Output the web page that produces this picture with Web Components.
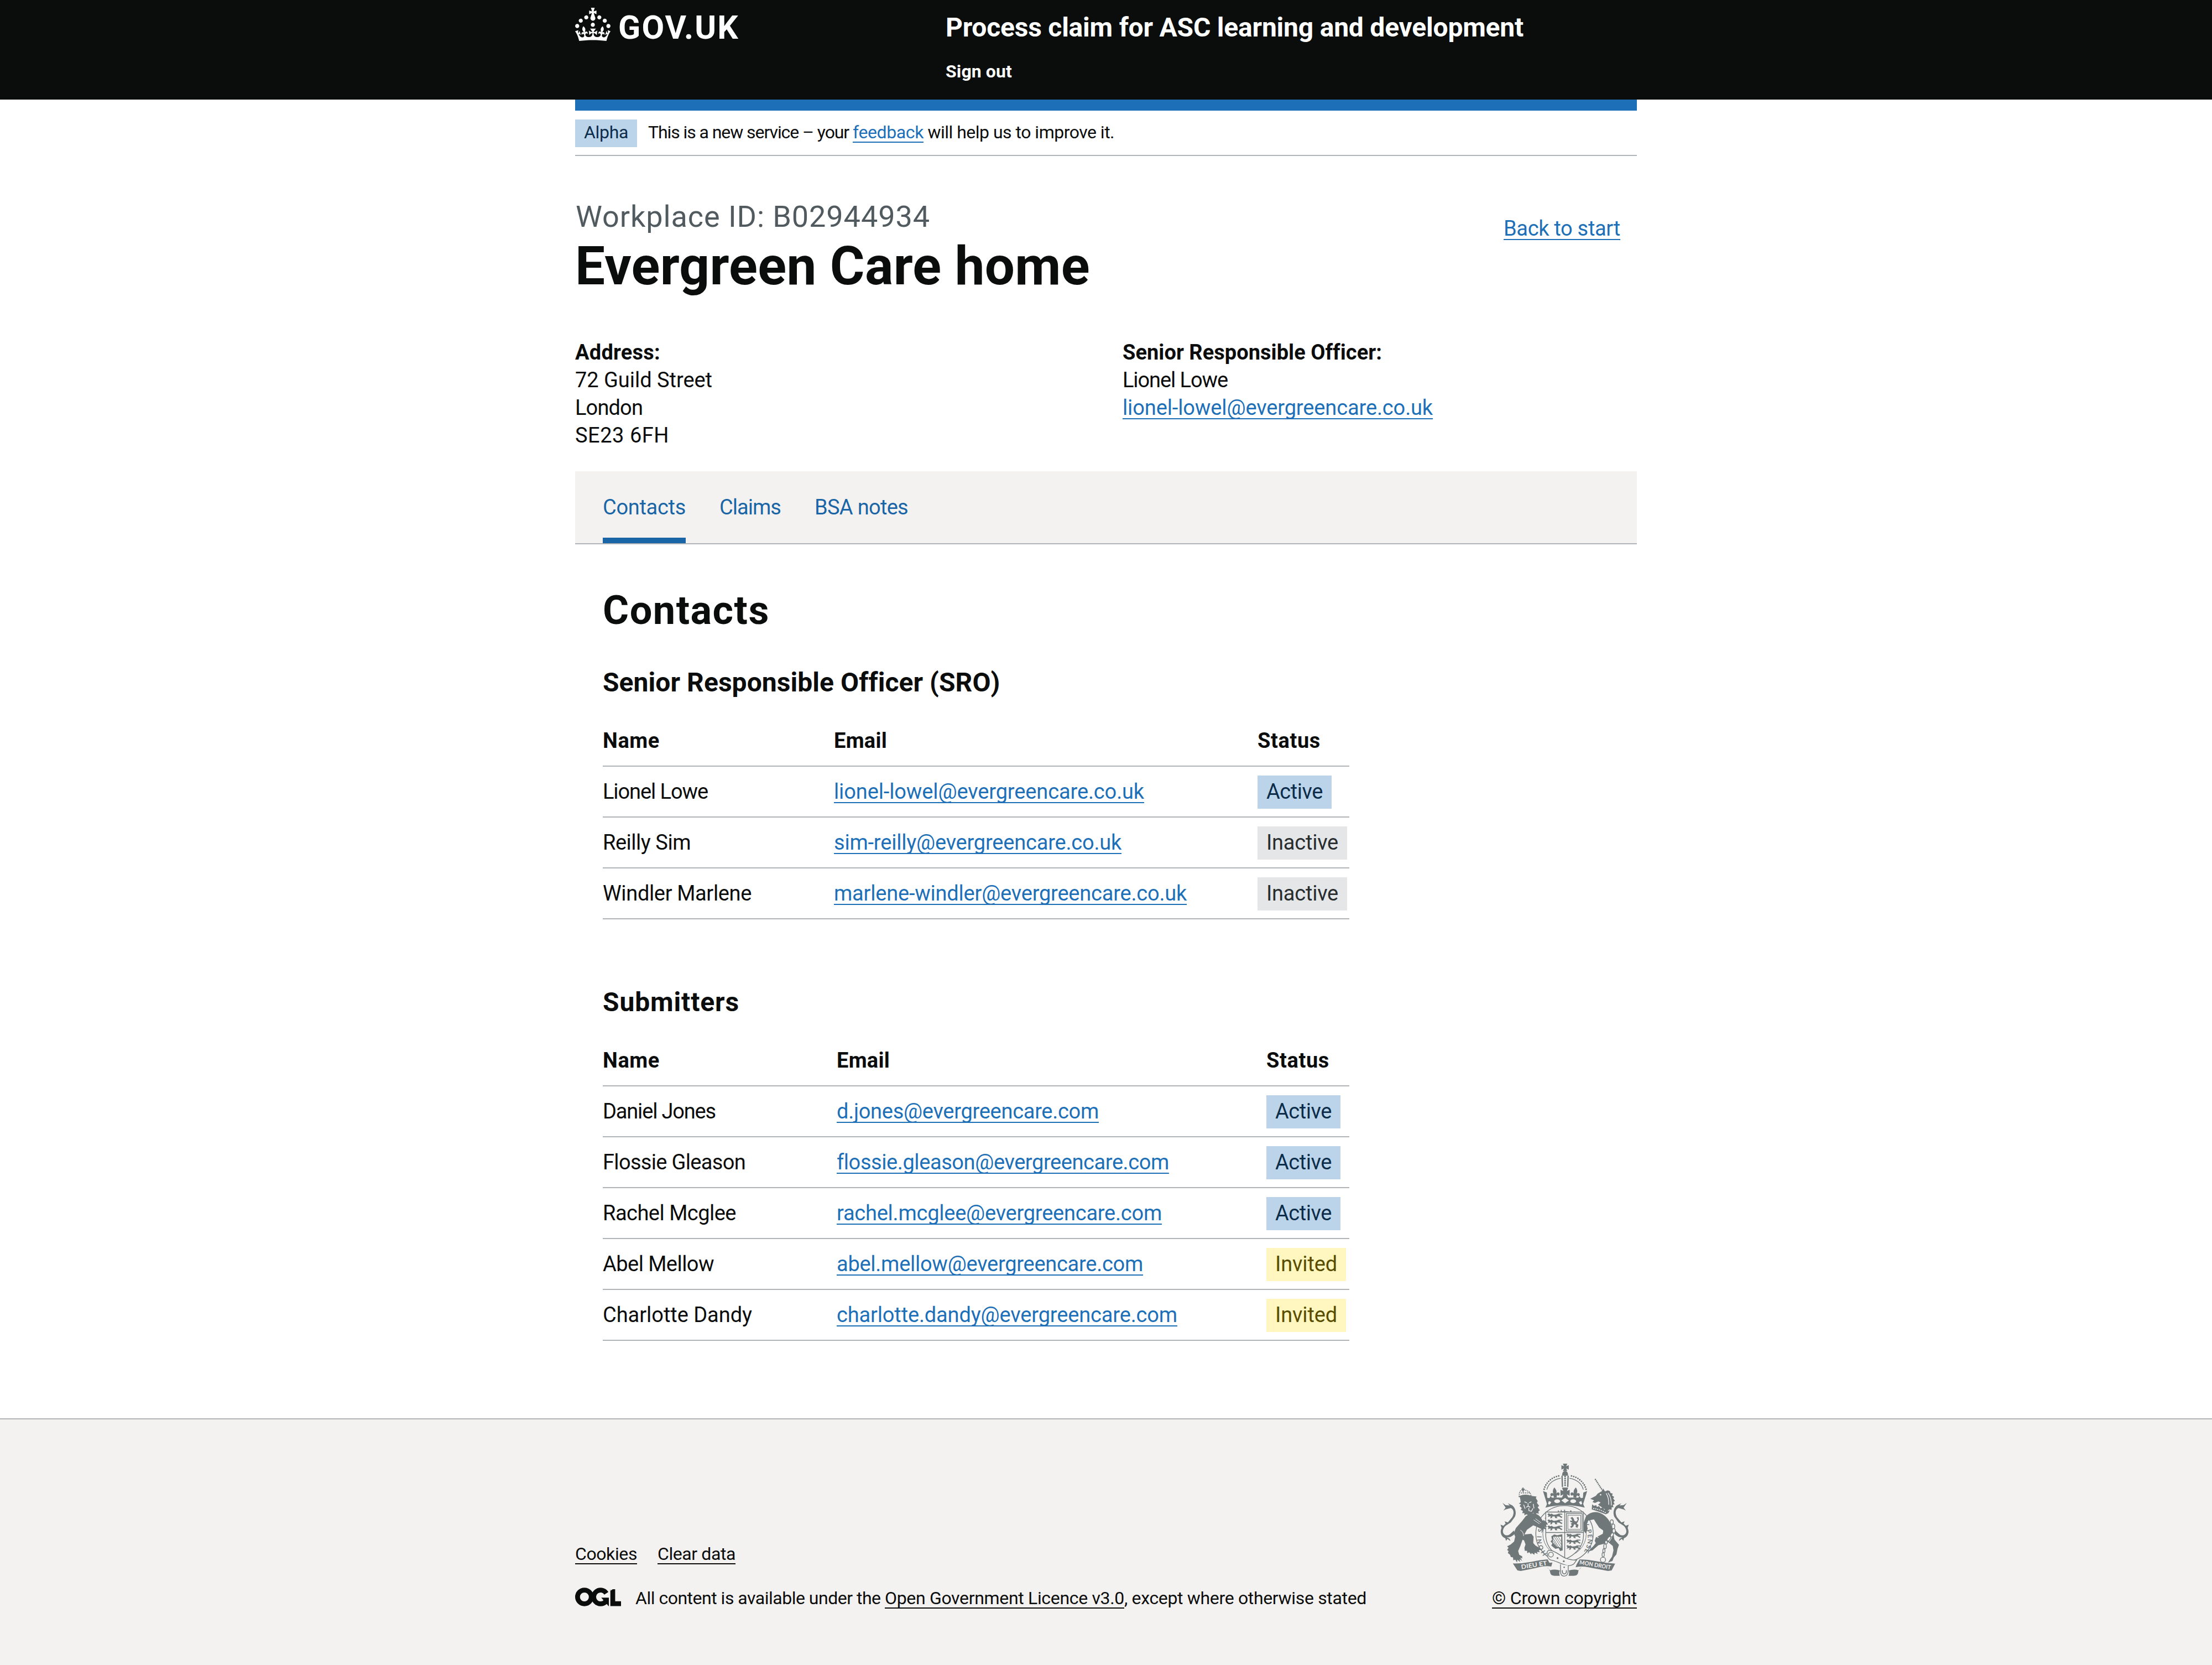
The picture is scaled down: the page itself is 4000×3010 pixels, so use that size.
<!DOCTYPE html>
<html lang="en">
<head>
<meta charset="utf-8">
<title>Evergreen Care home – Process claim for ASC learning and development</title>
<style>
html,body{margin:0;background:#fff}
body{font-family:Roboto,"Liberation Sans",Arial,sans-serif;font-size:38px;line-height:50px;color:#0b0c0c;width:4000px;min-height:3010px}
</style>
</head>
<body>
<claim-page></claim-page>
<script>
const define=(name,html,setup)=>customElements.define(name,class extends HTMLElement{
  constructor(){super();const r=this.attachShadow({mode:'open'});r.innerHTML=html;}
  connectedCallback(){if(setup&&!this.ready){this.ready=true;setup(this,this.shadowRoot);}}
});

define('claim-page',`
<style>
:host{display:flex;flex-direction:column;min-height:3010px}
.wrap{width:1920px;margin:0 auto}
.bar{height:20px;background:#1d70b8}
.body{padding:77px 50px 140px}
h1{margin:0;font-size:72px;line-height:86px;font-weight:700}
contact-table{margin-top:57px}
contact-table+contact-table{margin-top:120px}
site-footer{flex:1}
</style>
<site-header></site-header>
<main class="wrap">
  <div class="bar"></div>
  <phase-banner></phase-banner>
  <workplace-summary></workplace-summary>
  <tab-nav></tab-nav>
  <div class="body">
    <h1><fit-text w="302">Contacts</fit-text></h1>
    <contact-table style="--name:418px;--email:766px">
      <fit-text slot="title" w="716">Senior Responsible Officer (SRO)</fit-text>
      <fit-text slot="email" w="96">Email</fit-text>
      <contact-row name="Lionel Lowe" nw="190" email="lionel-lowel@evergreencare.co.uk" ew="561" status="Active" sw="102"></contact-row>
      <contact-row name="Reilly Sim" nw="159" email="sim-reilly@evergreencare.co.uk" ew="520" status="Inactive" sw="130"></contact-row>
      <contact-row name="Windler Marlene" nw="269" email="marlene-windler@evergreencare.co.uk" ew="638" status="Inactive" sw="130"></contact-row>
    </contact-table>
    <contact-table style="--name:423px;--email:777px">
      <fit-text slot="title" w="247">Submitters</fit-text>
      <fit-text slot="email" w="96">Email</fit-text>
      <contact-row name="Daniel Jones" nw="204" email="d.jones@evergreencare.com" ew="474" status="Active" sw="102"></contact-row>
      <contact-row name="Flossie Gleason" nw="258" email="flossie.gleason@evergreencare.com" ew="600" status="Active" sw="102"></contact-row>
      <contact-row name="Rachel Mcglee" nw="241" email="rachel.mcglee@evergreencare.com" ew="588" status="Active" sw="102"></contact-row>
      <contact-row name="Abel Mellow" nw="201" email="abel.mellow@evergreencare.com" ew="554" status="Invited" sw="112"></contact-row>
      <contact-row name="Charlotte Dandy" nw="270" email="charlotte.dandy@evergreencare.com" ew="616" status="Invited" sw="112"></contact-row>
    </contact-table>
  </div>
</main>
<site-footer></site-footer>`);

define('site-header',`
<style>
:host{display:block;background:#0b0c0c;color:#fff;height:180px}
.in{width:1920px;margin:0 auto;display:flex;align-items:flex-start}
.logo{width:670px;display:flex;gap:14px;padding-top:14px;box-sizing:border-box}
.logo b{font-size:59px;line-height:60px;margin-top:6px}
svg{display:block}
.t{display:flex;flex-direction:column;gap:29px;padding-top:20px;font-weight:700}
.title{font-size:48px;line-height:60px}
.out{font-size:32px;line-height:40px}
</style>
<div class="in">
 <div class="logo">
  <svg width="64" height="60" viewBox="0 0 32 30" fill="currentColor" aria-hidden="true"><path d="M22.6 10.4c-1 .4-2-.1-2.4-1-.4-.9.1-2 1-2.4.9-.4 2 .1 2.4 1s-.1 2-1 2.4m-5.9 6.7c-.9.4-2-.1-2.4-1-.4-.9.1-2 1-2.4.9-.4 2 .1 2.4 1s-.1 2-1 2.4m10.8-3.7c-1 .4-2-.1-2.4-1-.4-.9.1-2 1-2.4.9-.4 2 .1 2.4 1s0 2-1 2.4m3.3 4.8c-1 .4-2-.1-2.4-1-.4-.9.1-2 1-2.4.9-.4 2 .1 2.4 1s-.1 2-1 2.4M17 4.7l2.3 1.2V2.5l-2.3.7-.2-.2.9-3h-3.4l.9 3-.2.2c-.1.1-2.3-.7-2.3-.7v3.4L15 4.7c.1.1.1.2.2.2l-1.3 4c-.1.2-.1.4-.1.6 0 1.1.8 2 1.9 2.2h.7c1-.2 1.9-1.1 1.9-2.1 0-.2 0-.4-.1-.6l-1.3-4c-.1-.2 0-.2.1-.3m-7.6 5.7c.9.4 2-.1 2.4-1 .4-.9-.1-2-1-2.4-.9-.4-2 .1-2.4 1s0 2 1 2.4m-5 3c.9.4 2-.1 2.4-1 .4-.9-.1-2-1-2.4-.9-.4-2 .1-2.4 1s.1 2 1 2.4m-3.2 4.8c.9.4 2-.1 2.4-1 .4-.9-.1-2-1-2.4-.9-.4-2 .1-2.4 1s0 2 1 2.4m14.8 11c4.4 0 8.6.3 12.3.8 1.1-4.5 2.4-7 3.7-8.8l-2.5-.9c.2 1.3.3 1.9 0 2.7-.4-.4-.8-1.1-1.1-2.3l-1.2 4c.7-.5 1.3-.8 2-.9-1.1 2.5-2.6 3.1-3.5 3-1.1-.2-1.7-1.2-1.5-2.1.3-1.2 1.5-1.5 2.1-.1 1.1-2.3-.8-3-2-2.3 1.9-1.9 2.1-3.5.6-5.6-2.1 1.6-2.1 3.2-1.2 5.5-1.2-1.4-3.2-.6-2.5 1.6.9-1.4 2.1-.5 1.9.8-.2 1.1-1.7 2.1-3.5 1.9-2.7-.2-2.9-2.1-2.9-3.6.7-.1 1.9.5 2.9 1.9l.4-4.3c-1.1 1.1-2.1 1.4-3.2 1.4.4-1.2 2.1-3 2.1-3h-5.4s1.7 1.9 2.1 3c-1.1 0-2.1-.2-3.2-1.4l.4 4.3c1-1.4 2.2-2 2.9-1.9-.1 1.5-.2 3.4-2.9 3.6-1.9.2-3.4-.8-3.5-1.9-.2-1.3 1-2.2 1.9-.8.7-2.3-1.2-3-2.5-1.6.9-2.2.9-3.9-1.2-5.5-1.5 2-1.3 3.7.6 5.6-1.2-.7-3.1 0-2 2.3.6-1.4 1.8-1.1 2.1.1.2.9-.3 1.9-1.5 2.1-.9.2-2.4-.5-3.5-3 .6 0 1.2.3 2 .9l-1.2-4c-.3 1.1-.7 1.9-1.1 2.3-.3-.8-.2-1.4 0-2.7l-2.9.9C1.3 23 2.6 25.5 3.7 30c3.7-.5 7.9-.8 12.3-.8"/></svg>
  <b><fit-text w="219">GOV.UK</fit-text></b>
 </div>
 <div class="t">
  <div class="title"><fit-text w="1045">Process claim for ASC learning and development</fit-text></div>
  <div class="out"><fit-text w="120">Sign out</fit-text></div>
 </div>
</div>`);

define('status-tag',`
<style>
:host{display:block;padding:0 16px 2px;line-height:58px;background:#bbd4ea;color:#0c2d4a;white-space:nowrap}
:host([tone=Inactive]){background:#e5e6e7;color:#282d30}
:host([tone=Invited]){background:#fff7bf;color:#594d00}
:host([tone=Alpha]){font-size:32px;line-height:46px;padding-bottom:4px}
</style><slot></slot>`);

define('text-link',`<style>
:host{color:#1d70b8;white-space:nowrap}
:host([dark]){color:#0b0c0c}
a{color:inherit;text-decoration:underline;text-decoration-thickness:2px;text-underline-offset:6px;text-decoration-skip-ink:none}
</style><a><slot></slot></a>`);

define('phase-banner',`
<style>
:host{display:flex;align-items:flex-start;gap:20px;height:64px;padding-top:16px;border-bottom:2px solid #b1b4b6;font-size:32px;line-height:40px}
.m{margin-top:3px;white-space:nowrap}
</style>
<status-tag tone="Alpha"><fit-text w="80">Alpha</fit-text></status-tag>
<div class="m"><fit-text w="370">This is a new service – your </fit-text><text-link><fit-text w="128">feedback</fit-text></text-link><fit-text w="345"> will help us to improve it.</fit-text></div>`);

define('workplace-summary',`
<style>
:host{display:block;padding-bottom:40px}
.top{display:flex;justify-content:space-between;align-items:flex-start;padding-top:80px}
.cap{font-size:54px;line-height:60px;color:#505a5f;padding-left:1px}
.h{font-size:96px;line-height:100px;font-weight:700;margin-top:9px}
text-link{margin:26px 30px 0 0}
.cols{display:grid;grid-template-columns:1fr 1fr;column-gap:60px;margin-top:81px}
.cols text-link{margin:0}
b{display:block}
</style>
<div class="top">
 <div>
  <div class="cap"><fit-text w="641">Workplace ID: B02944934</fit-text></div>
  <div class="h"><fit-text w="931">Evergreen Care home</fit-text></div>
 </div>
 <text-link><fit-text w="211">Back to start</fit-text></text-link>
</div>
<div class="cols">
 <div><b><fit-text w="154">Address:</fit-text></b><div><fit-text w="248">72 Guild Street</fit-text></div><div><fit-text w="122">London</fit-text></div><div><fit-text w="170">SE23 6FH</fit-text></div></div>
 <div><b><fit-text w="467">Senior Responsible Officer:</fit-text></b><div><fit-text w="190">Lionel Lowe</fit-text></div><div><text-link><fit-text w="561">lionel-lowel@evergreencare.co.uk</fit-text></text-link></div></div>
</div>`);

define('tab-nav',`
<style>
:host{display:flex;gap:61px;background:#f3f2f1;border-bottom:2px solid #b1b4b6;padding:40px 50px 0;color:#1a65a6}
div{padding-bottom:30px;border-bottom:10px solid transparent}
.on{border-color:#1a65a6}
</style>
<div class="on"><fit-text w="150">Contacts</fit-text></div><div><fit-text w="111">Claims</fit-text></div><div><fit-text w="169">BSA notes</fit-text></div>`);

define('contact-table',`
<style>
:host{display:block;width:1350px}
.title{font-size:48px;line-height:60px;font-weight:700}
.head{display:grid;grid-template-columns:var(--name) var(--email) 1fr;margin-top:50px;padding-bottom:20px;border-bottom:2px solid #b1b4b6;font-weight:700}
</style>
<div class="title"><slot name="title"></slot></div>
<div class="head"><span><fit-text w="103">Name</fit-text></span><span><slot name="email"></slot></span><span><fit-text w="114">Status</fit-text></span></div>
<slot></slot>`);

define('contact-row',`
<style>
:host{display:grid;grid-template-columns:var(--name) var(--email) 1fr;height:90px;border-bottom:2px solid #b1b4b6;align-items:start}
span{padding-top:20px}
status-tag{margin-top:16px;justify-self:start}
</style>
<span><fit-text class="n"></fit-text></span><span><text-link><fit-text class="e"></fit-text></text-link></span><status-tag><fit-text class="s"></fit-text></status-tag>`,(el,r)=>{
  for(const [c,t,w] of [['.n','name','nw'],['.e','email','ew'],['.s','status','sw']]){
    const f=r.querySelector(c);f.textContent=el.getAttribute(t);f.setAttribute('w',el.getAttribute(w));
  }
  r.querySelector('status-tag').setAttribute('tone',el.getAttribute('status'));
});

define('site-footer',`
<style>
:host{display:block;background:#f3f2f1;border-top:2px solid #b1b4b6;font-size:32px;line-height:40px}
.in{width:1920px;margin:0 auto;padding-top:80px;display:flex;justify-content:space-between;align-items:flex-end}
.links{display:flex;gap:37px}
.lic{display:flex;gap:26px;margin-top:40px;white-space:nowrap}
.ogl{display:block;margin-top:1px}
.r{display:flex;flex-direction:column;align-items:center;gap:19px;width:262px}
</style>
<div class="in">
 <div>
  <div class="links"><text-link dark><fit-text w="112">Cookies</fit-text></text-link><text-link dark><fit-text w="141">Clear data</fit-text></text-link></div>
  <div class="lic">
   <svg class="ogl" width="83" height="34" viewBox="0 0 483.2 195.7" fill="none" stroke="#0b0c0c" stroke-width="50.7" role="img" aria-label="OGL">
    <circle cx="97.8" cy="97.8" r="72.4"/>
    <path d="M329 58.900A72.400 72.400 0 1 0 321 147"/>
    <path d="M275 105.700h80v87.800h-3z" fill="#0b0c0c" stroke="none"/>
    <path d="M396.200 16V168.200H483.200"/>
    <path d="M370.800 0v33L422 0z" fill="#f3f2f1" stroke="none"/>
   </svg>
   <div><fit-text w="451">All content is available under the </fit-text><text-link dark><fit-text w="433">Open Government Licence v3.0</fit-text></text-link><fit-text w="438">, except where otherwise stated</fit-text></div>
  </div>
 </div>
 <div class="r"><royal-arms></royal-arms><text-link dark><fit-text w="262">© Crown copyright</fit-text></text-link></div>
</div>`);

define('royal-arms',`
<style>:host{display:block;height:204px}svg{display:block;width:233px;height:204px}text{font-family:Lato,"Liberation Sans",sans-serif}</style>
<svg viewBox="132 77 698 613" fill="#6f7779" stroke="none" role="img" aria-label="Royal coat of arms">
<defs>
 <path id="lis" d="M0-36C9-24 13-14 7-1 14-10 27-8 25 4 23 13 14 12 13 6 9 8 7 12 8 20H-8C-7 12-9 8-13 6-14 12-23 13-25 4-27-8-14-10-7-1-13-14-9-24 0-36Z"/>
 <path id="cross" d="M-12-20H12L6-6 20-12V12L6 6 12 20H-12L-6 6-20 12V-12L-6-6Z"/>
 <g id="half">
  <path d="M369 216C378 180 412 148 458 142" fill="none" stroke="#6f7779" stroke-width="9" stroke-linecap="round" stroke-dasharray="0 12.500"/>
  <path d="M384 218C392 186 420 162 459 156" fill="none" stroke="#6f7779" stroke-width="4"/>
  <path d="M363 226L384 234 386 262C395 268 404 262 402 252L412 262 450 262 470 268V282H396L386 300Z"/>
  <use href="#lis" transform="translate(428 242) rotate(-6)"/>
 </g>
 <g id="lion3"><path id="pas" d="M0 5L8 1 16 6 22 2 34 9 50 7 62 2 80 3 82 8 66 8 72 16 82 20 76 26 64 18 50 18 54 27 42 26 40 18 28 17 24 27 14 27 20 18 10 18 2 22 6 13Z"/><use href="#pas" y="33"/><use href="#pas" y="66"/></g>
 <path id="motto" d="M389 571A126 130 0 1 1 577 566"/>
</defs>
<!-- imperial crown -->
<use href="#cross" transform="translate(483 97)"/>
<path d="M467 142C466 124 475 117 483 117S500 124 499 142Z"/>
<path d="M463 142L470 142 472 203H465ZM503 142H496L494 203H501Z"/>
<path d="M483 146V203" fill="none" stroke="#6f7779" stroke-width="10" stroke-linecap="round" stroke-dasharray="0 12"/>
<use href="#half"/><use href="#half" transform="translate(966 0) scale(-1 1)"/>
<path d="M466 207H500L493 226 508 219V251L492 244 502 266H464L474 244 458 251V219L473 226Z"/>
<path d="M392 268Q483 252 574 268L584 305Q483 296 382 305Z"/>
<g fill="#f3f2f1"><path d="M463 277L483 263 504 277 483 292Z"/><ellipse cx="440" cy="281" rx="16" ry="10"/><ellipse cx="527" cy="281" rx="16" ry="10"/><path d="M390 294L395 280 408 286 398 302ZM576 294L571 280 558 286 568 302Z"/></g>
<!-- garter -->
<ellipse cx="480" cy="458" rx="156" ry="153" fill="#f3f2f1" stroke="#6f7779" stroke-width="4"/>
<ellipse cx="480" cy="458" rx="118" ry="122" fill="none" stroke="#6f7779" stroke-width="3"/>
<text font-size="34" font-weight="700"><textPath href="#motto" textLength="570" startOffset="6">HONI SOIT QUI MAL Y PENSE</textPath></text>
<path d="M384 299Q483 292 582 299L590 316Q483 288 376 316Z"/>
<!-- shield -->
<path d="M378 340H583V470Q580 552 481 598 382 552 378 470Z" fill="#f3f2f1" stroke="#6f7779" stroke-width="4"/>
<path d="M481 340V598M378 451H583" stroke="#6f7779" stroke-width="4" fill="none"/>
<use href="#lion3" transform="translate(387 346)"/>
<use href="#lion3" transform="translate(490 456) scale(.95)"/>
<g fill="none" stroke="#6f7779"><rect x="490" y="348" width="86" height="95" stroke-width="4"/><rect x="498" y="357" width="70" height="77" stroke-width="3"/></g>
<path d="M512 372L522 366 530 376 534 388 544 392 552 382 546 370 556 366 558 380 552 394 546 402 556 410 550 426 540 420 542 410 532 406 528 418 518 426 510 420 520 412 514 402 524 398 512 394 510 386 522 388 518 378Z"/>
<path d="M408 472L424 462 440 466 468 460 470 548 456 552 448 536 430 540 408 522 414 510 404 500 412 490Z"/>
<path d="M420 474L462 474V534L436 526 416 504Z" fill="#f3f2f1"/>
<path d="M424 474L460 530M434 474L462 516M446 474L462 500M416 480L448 530M418 496L438 526" stroke="#6f7779" stroke-width="3" fill="none"/>
<!-- lion supporter -->
<path d="M234 256C232 226 244 220 256 220S298 226 298 256Z" fill="none" stroke="#6f7779" stroke-width="6" stroke-dasharray="5 5"/>
<path d="M236 252Q268 238 300 252L298 272Q268 260 240 272ZM250 208H258V214H264V220H258V232H252V220H246V214H250Z"/>
<path d="M244 236H292" stroke="#6f7779" stroke-width="5" stroke-dasharray="6 5"/>
<path d="M240 272L262 262 290 262 300 252 328 256 324 264 334 280 330 290 342 306 334 314 346 330 338 336 340 350 330 346 322 352 310 344 290 360 272 352 262 358 262 346 250 346 254 334 242 328 248 318 236 308 244 298 232 294 242 286Z"/>
<path d="M262 284L276 290M300 284L288 290M282 292V308L272 314M282 308L294 314M286 318V332L300 336 308 320M258 300L266 322M310 296L314 320" stroke="#f3f2f1" stroke-width="4" fill="none"/>
<path d="M288 352L312 346C338 352 352 366 360 386L384 396 390 408 376 408 386 420 372 420 382 436 366 430 366 442 350 430 330 420 310 412 276 436 262 462 300 458 312 474 310 508 322 522 336 530 354 544 340 548 346 558 330 556 334 568 318 560 316 572 302 562 298 570 288 558 278 564 276 550 264 550 262 534 268 516 260 494 252 490 240 524 228 552 234 572 250 580 250 592 240 588 250 606 236 596 238 612 224 598 222 614 212 598 202 602 200 586 188 584 184 572 172 562 176 552 168 546 176 534 168 526 188 516 206 500 212 474 204 454 216 426 248 390 270 362Z"/>
<path d="M240 438Q256 446 258 470M312 382L344 404M322 376L352 398" stroke="#f3f2f1" stroke-width="3" fill="none"/>
<path id="tail" d="M143 290L160 302 182 304 172 292 196 304C214 318 220 346 210 366L188 396 160 414C142 430 140 456 156 464 174 472 186 460 204 440L210 458C192 476 176 480 166 476L182 486 186 498 170 486 162 496 158 482C134 474 128 446 138 426L132 408 148 414 160 402 154 390 172 396 196 368C208 344 204 324 188 318L160 326 148 332 160 316Z"/>
<use href="#tail" transform="translate(961 0) scale(-1 1)"/>
<!-- unicorn supporter -->
<path d="M646 160L686 222" stroke="#6f7779" stroke-width="7" stroke-dasharray="7 3" fill="none"/>
<path d="M620 268L650 252 660 240 684 226 690 212 700 228 714 222 726 226 730 236 742 240 738 250 750 258 744 266 754 278 746 284 752 298 742 300 746 314 736 314 736 328 724 326 712 334 662 300 676 288 664 282 646 290 632 286 640 276Z"/>
<path d="M706 238Q722 262 720 300M716 236Q736 262 734 304" stroke="#f3f2f1" stroke-width="4" fill="none"/><circle cx="676" cy="246" r="4" fill="#f3f2f1"/>
<path d="M630 298L640 306 652 302 656 312 668 308 676 320 688 314 696 328 708 322 716 334 726 330 718 346 704 352Q660 336 628 326Z"/>
<path d="M636 320Q670 324 704 344" stroke="#f3f2f1" stroke-width="5" stroke-dasharray="6 5" fill="none"/>
<path d="M596 364C614 344 640 336 664 342 700 352 728 382 738 424 748 448 746 470 752 490L776 518 768 540 762 570 748 586 740 606 716 614 738 582 746 548 742 524 716 502 696 512 664 520 632 548 606 554 634 528 650 508 644 496 650 478 688 458 690 440 668 424 652 400 640 380 610 386 600 402 606 430 596 456 584 442 584 398 592 376Z"/>
<path d="M656 454L690 446M650 468L664 480M722 500Q742 476 740 450" stroke="#f3f2f1" stroke-width="4" fill="none"/>
<g fill="#f3f2f1" stroke="#6f7779" stroke-width="4"><ellipse cx="737" cy="394" rx="8" ry="12"/><ellipse cx="745" cy="418" rx="8" ry="13"/><ellipse cx="748" cy="442" rx="8" ry="12"/><ellipse cx="738" cy="464" rx="7" ry="12" transform="rotate(25 738 464)"/><ellipse cx="721" cy="485" rx="7" ry="14" transform="rotate(35 721 485)"/><ellipse cx="706" cy="504" rx="7" ry="10"/><ellipse cx="700" cy="526" rx="7" ry="13"/><ellipse cx="694" cy="550" rx="6" ry="11"/><ellipse cx="690" cy="572" rx="6" ry="12"/><circle cx="689" cy="599" r="14"/></g>
<!-- belt and motto scroll -->
<path d="M386 566Q382 546 404 548C432 552 462 582 490 592 514 600 530 602 546 600L532 620Q516 634 494 630C456 622 430 602 404 600 390 594 386 582 386 566Z" fill="#f3f2f1" stroke="#6f7779" stroke-width="4"/>
<circle cx="406" cy="571" r="13" fill="none" stroke="#6f7779" stroke-width="4"/><circle cx="442" cy="590" r="5"/><circle cx="476" cy="607" r="5"/>
<path d="M458 624V655Q456 688 478 688T500 655V630" fill="#f3f2f1" stroke="#6f7779" stroke-width="4"/>
<path d="M468 656Q466 676 479 676T490 656" fill="none" stroke="#6f7779" stroke-width="5"/><circle cx="478" cy="640" r="4"/>
<path d="M199 619Q250 620 300 610T388 597L398 616 414 614 408 636Q380 630 340 640T242 660L224 657ZM755 620Q710 618 660 608T562 597L546 624 540 640Q570 632 610 640T716 660L736 657Z"/>
<path d="M384 640Q400 650 402 668T426 686H454Q448 664 456 658 430 648 402 656M572 640Q556 650 554 668T530 686H502Q508 664 502 658 530 648 556 656"/>
<g fill="#f3f2f1" font-weight="700" font-size="33"><text transform="translate(246 650) rotate(-9)" textLength="142" lengthAdjust="spacingAndGlyphs">DIEU ET</text><text transform="translate(560 623) rotate(9.500)" font-size="31" textLength="172" lengthAdjust="spacingAndGlyphs">MON DROIT</text></g>
</svg>`);

/* Spreads its text evenly over the advance width given in "w". */
define('fit-text','<style>:host{white-space:pre}</style><slot></slot>',el=>{
  const w=+el.getAttribute('w'),n=[...el.textContent].length;
  if(!w||!n)return;
  const now=el.getBoundingClientRect().width;
  el.style.letterSpacing=((w-now)/n).toFixed(3)+'px';
});
</script>
</body>
</html>
